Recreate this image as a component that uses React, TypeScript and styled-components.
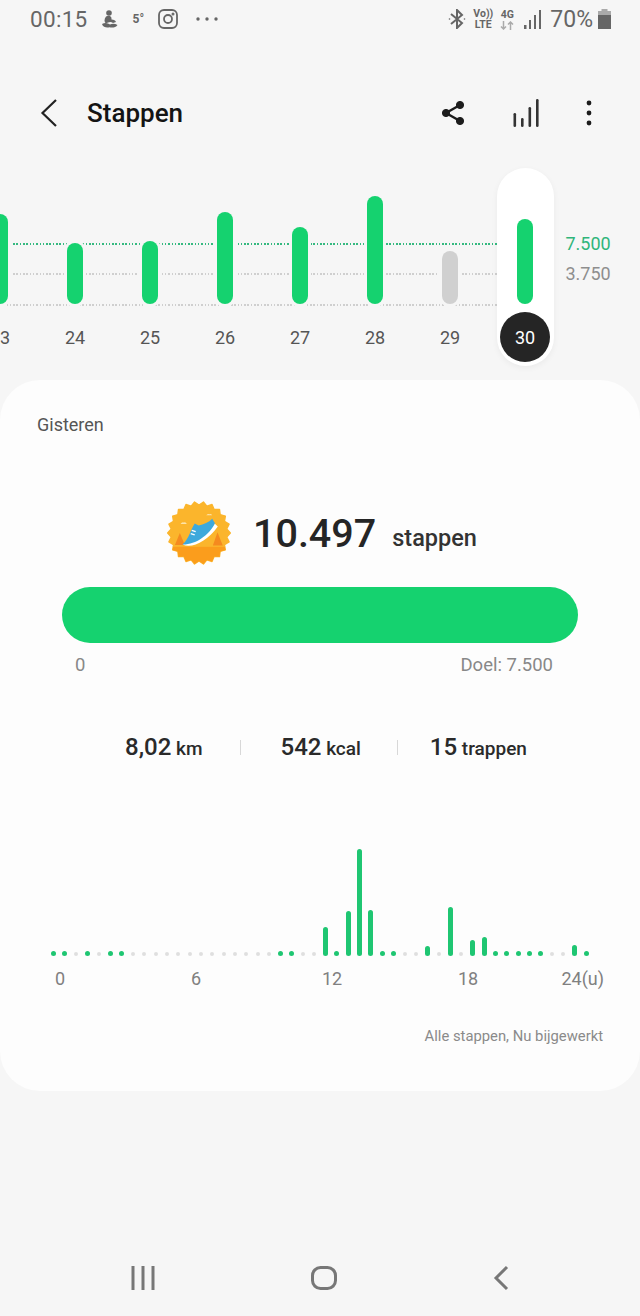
import styled, { createGlobalStyle } from 'styled-components';

const GREEN = '#15d26f';
const CHART_GREEN = '#1fc672';

const days = [
    { label: '23', height: 90 },
    { label: '24', height: 61 },
    { label: '25', height: 63 },
    { label: '26', height: 92 },
    { label: '27', height: 77 },
    { label: '28', height: 108 },
    { label: '29', height: 53, muted: true },
    { label: '30', height: 85, selected: true },
];

// hourly chart: 48 slots, index -> bar height. Anything else is a dot
const hourBars: Record<number, number> = {
    24: 29, 26: 45, 27: 107, 28: 46, 33: 10, 35: 49, 37: 16, 38: 19, 46: 11,
};
const greenDots = [0, 1, 3, 5, 6, 20, 21, 25, 29, 30, 39, 40, 41, 42, 43, 47];
const slots = Array.from({ length: 48 }, (_, i) => i);

const GlobalStyle = createGlobalStyle`
    html, body {
        margin: 0;
        padding: 0;
        background: #f6f6f6;
    }
    body {
        font-family: Roboto, "Liberation Sans", sans-serif;
    }
`;

const Page = styled.div`
    width: 640px;
    height: 1316px;
    overflow: hidden;
    display: flex;
    flex-direction: column;
    background: #f6f6f6;
`;

const StatusBar = styled.div`
    height: 38px;
    padding: 0 29px 0 30px;
    display: flex;
    align-items: center;
    justify-content: space-between;
    color: #666;
`;

const StatusGroup = styled.div`
    display: flex;
    align-items: center;
`;

const Clock = styled.span`
    font-size: 22.5px;
    letter-spacing: 0.3px;
    margin-right: 12px;
`;

const Degrees = styled.span`
    font-size: 12px;
    font-weight: 700;
    margin: 0 14px 0 15px;
`;

const StackedIcon = styled.div<{ $w: number; $gap: number }>`
    width: ${p => p.$w}px;
    margin-right: ${p => p.$gap}px;
    font-size: 10.5px;
    font-weight: 700;
    line-height: 11px;
    text-align: center;
`;

const Percent = styled.span`
    font-size: 23px;
    margin: 0 5px 0 8px;
`;

const Header = styled.header`
    height: 74px;
    margin-top: 38px;
    padding: 0 48px 0 40px;
    display: flex;
    align-items: center;
`;

const Title = styled.h1`
    margin: 0 0 0 29px;
    flex: 1;
    font-size: 26px;
    font-weight: 500;
    color: #141414;
`;

const HeaderActions = styled.div`
    display: flex;
    align-items: center;
    gap: 47px;
`;

const Trend = styled.section`
    position: relative;
    margin-top: 18px;
    height: 198px;
    display: flex;
`;

const GridLine = styled.div<{ $top: number; $green?: boolean }>`
    position: absolute;
    left: 0;
    width: 497px;
    height: 1.5px;
    top: ${p => p.$top}px;
    background: repeating-linear-gradient(
        90deg,
        ${p => (p.$green ? '#35b980' : '#cfcfcf')} 0 1.5px,
        transparent 1.5px 3.3px
    );
`;

const Columns = styled.div`
    position: relative;
    display: flex;
    margin-left: -37.5px;
`;

const Column = styled.div`
    width: 75px;
    display: flex;
    justify-content: center;
`;

const ColumnInner = styled.div<{ $selected?: boolean }>`
    width: 57px;
    height: 198px;
    display: flex;
    flex-direction: column;
    align-items: center;
    border-radius: 29px;
    background: ${p => (p.$selected ? '#fff' : 'transparent')};
    box-shadow: ${p => (p.$selected ? '0 2px 6px rgba(0, 0, 0, 0.05)' : 'none')};
`;

const BarSlot = styled.div`
    height: 136px;
    display: flex;
    align-items: flex-end;
`;

const Bar = styled.div<{ $muted?: boolean; $selected?: boolean }>`
    width: 16px;
    border-radius: 8px;
    background: ${p => (p.$muted ? '#d0d0d0' : GREEN)};
    box-shadow: 0 0 0 3px ${p => (p.$selected ? '#fff' : '#f6f6f6')};
`;

const DayLabel = styled.div<{ $selected?: boolean }>`
    width: 50px;
    height: 50px;
    margin-top: 8px;
    border-radius: 50%;
    display: flex;
    align-items: center;
    justify-content: center;
    font-size: 18px;
    color: ${p => (p.$selected ? '#fff' : '#555')};
    background: ${p => (p.$selected ? '#252525' : 'transparent')};
`;

const Scale = styled.div`
    margin-left: 3px;
    padding-top: 65px;
    display: flex;
    flex-direction: column;
    gap: 8px;
    font-size: 18px;
    line-height: 22px;
`;

const ScaleValue = styled.span<{ $green?: boolean }>`
    color: ${p => (p.$green ? '#2fb57a' : '#8e8e8e')};
`;

const Card = styled.main`
    margin-top: 14px;
    height: 711px;
    box-sizing: border-box;
    padding: 34px 37px 0;
    border-radius: 40px;
    background: #fdfdfd;
    display: flex;
    flex-direction: column;
`;

const CardTitle = styled.div`
    font-size: 18px;
    line-height: 22px;
    color: #555;
`;

const Total = styled.div`
    margin-top: 64px;
    display: flex;
    align-items: center;
    padding-left: 129px;
`;

const TotalValue = styled.span`
    margin-left: 21px;
    font-size: 39.5px;
    font-weight: 500;
    color: #252525;
`;

const TotalUnit = styled.span`
    margin: 9px 0 0 16px;
    font-size: 23.5px;
    font-weight: 500;
    color: #333;
`;

const Progress = styled.div`
    margin: 21px 25px 0;
    height: 56px;
    border-radius: 28px;
    background: ${GREEN};
`;

const GoalRow = styled.div`
    margin: 11px 50px 0 38px;
    display: flex;
    justify-content: space-between;
    font-size: 18.5px;
    line-height: 22px;
    color: #888;
`;

const Stats = styled.div`
    margin-top: 57px;
    height: 27px;
    padding-left: 88px;
    display: flex;
    align-items: baseline;
    color: #2a2a2a;
`;

const Stat = styled.div`
    font-size: 19px;
    font-weight: 500;
    b {
        font-size: 24px;
        font-weight: 500;
    }
`;

const StatDivider = styled.span<{ $before: number; $after: number }>`
    width: 1px;
    height: 15px;
    margin: 0 ${p => p.$after}px 0 ${p => p.$before}px;
    background: #d8d8d8;
`;

const HourChart = styled.div`
    margin: 86px 0 0 11px;
    height: 110px;
    display: flex;
    align-items: flex-end;
`;

const HourSlot = styled.div`
    width: 11.33px;
    display: flex;
    justify-content: center;
`;

const HourBar = styled.div<{ $green: boolean }>`
    width: ${p => (p.$green ? 5 : 4)}px;
    min-height: 4px;
    margin-bottom: ${p => (p.$green ? 0 : 0.5)}px;
    border-radius: 3px;
    background: ${p => (p.$green ? CHART_GREEN : '#dfdfdf')};
`;

const Axis = styled.div`
    margin: 12px 0 0 23px;
    display: grid;
    grid-template-columns: repeat(4, 136px) auto;
    font-size: 18px;
    line-height: 22px;
    color: #808080;
`;

const Tick = styled.span<{ $end?: boolean }>`
    justify-self: start;
    transform: translateX(${p => (p.$end ? '-100%' : '-50%')});
    white-space: nowrap;
`;

const Footnote = styled.div`
    margin-top: 37px;
    text-align: right;
    font-size: 14.8px;
    line-height: 18px;
    color: #8a8a8a;
`;

const NavBar = styled.nav`
    margin-top: 174px;
    padding: 0 131px;
    display: flex;
    align-items: center;
    justify-content: space-between;
`;

// seal outline of the achievement badge, alternating outer and inner radius
const sealPoints = Array.from({ length: 44 }, (_, i) => {
    const a = (i * Math.PI) / 22;
    const r = i % 2 === 0 ? 95 : 85;
    return `${(150 + r * Math.cos(a)).toFixed(1)},${(128 + r * Math.sin(a)).toFixed(1)}`;
}).join(' ');

const Badge = () => (
    <svg width="66" height="66" viewBox="50 28 200 200">
        <defs>
            <clipPath id="badge-seal">
                <polygon points={sealPoints} />
            </clipPath>
        </defs>
        <polygon points={sealPoints} fill="#fbb52c" stroke="#fbb52c" strokeWidth="4" strokeLinejoin="round" />
        <rect x="50" y="170" width="200" height="60" fill="#fb9d1c" clipPath="url(#badge-seal)" />
        <path d="M92 128 L107 164 H77 Z M206 126 L222 166 H192 Z" fill="#f58a1f" />
        <path d="M94 101 q4 -7 10 -5 q6 -3 9 5 Z M172 74 q5 -5 10 -3 q5 -1 8 3 Z" fill="#fde3a8" />
        <path d="M100 163 C122 142 124 118 137 99 L149 105 C164 102 180 96 190 85 L198 98 C196 118 180 134 160 147 C140 160 118 168 100 163 Z" fill="#3ea9dc" />
        <path d="M100 163 C130 176 176 152 207 108 L198 100 C180 134 140 164 100 163 Z" fill="#fff" />
        <path d="M128 120 l12 4 M125 130 l12 4" stroke="#fff" strokeWidth="4" />
    </svg>
);

const App = () => {
    return (
        <Page>
            <GlobalStyle />
            <StatusBar>
                <StatusGroup>
                    <Clock>00:15</Clock>
                    <svg width="18" height="18" viewBox="0 0 18 18" fill="#666">
                        <circle cx="9" cy="3" r="2.8" />
                        <path d="M6 6.5 C9 5 12 6 11.5 9.5 C14 9.5 15.5 10.5 16 12 L13 13 C11 11 8 12 6 13.5 C4 12 4 9 6 6.5 Z" />
                        <path d="M2 14 C5 12 8 13 10 14.5 C12 13.5 15 13.5 17.5 15 C16 17.5 12 18 9.5 17.2 C7 18 3 17.5 2 14 Z" />
                    </svg>
                    <Degrees>5°</Degrees>
                    <svg width="20" height="20" viewBox="0 0 20 20" fill="none" stroke="#666" strokeWidth="1.8">
                        <rect x="1" y="1" width="18" height="18" rx="5" />
                        <circle cx="10" cy="10" r="4" />
                        <circle cx="15" cy="5" r="0.6" fill="#666" />
                    </svg>
                    <svg width="22" height="4" viewBox="0 0 22 4" fill="#666" style={{ marginLeft: 18 }}>
                        <circle cx="2" cy="2" r="1.7" />
                        <circle cx="11" cy="2" r="1.7" />
                        <circle cx="20" cy="2" r="1.7" />
                    </svg>
                </StatusGroup>
                <StatusGroup>
                    <svg width="18" height="20" viewBox="0 0 18 20" fill="none" stroke="#666" strokeWidth="2" style={{ marginRight: 7 }}>
                        <path d="M3 5 L14 14 L9 19 V1 L14 6 L3 15" />
                        <circle cx="1.5" cy="10" r="0.8" fill="#666" stroke="none" />
                        <circle cx="16.5" cy="10" r="0.8" fill="#666" stroke="none" />
                    </svg>
                    <StackedIcon $w={20} $gap={6}>Vo))<br />LTE</StackedIcon>
                    <StackedIcon $w={16} $gap={9}>
                        4G
                        <svg width="14" height="9" viewBox="0 0 14 9" fill="none" strokeWidth="1.5" style={{ display: 'block', margin: '1px auto 0' }}>
                            <path d="M3.5 0 V8 M1 5.5 L3.5 8 L6 5.5" stroke="#aaa" />
                            <path d="M10.5 9 V1 M8 3.5 L10.5 1 L13 3.5" stroke="#aaa" />
                        </svg>
                    </StackedIcon>
                    <svg width="18" height="19" viewBox="0 0 18 19" fill="#666">
                        <rect x="0" y="15" width="2.5" height="4" />
                        <rect x="5" y="10" width="2" height="9" />
                        <rect x="10" y="5" width="2" height="14" />
                        <rect x="15" y="0" width="2" height="19" />
                    </svg>
                    <Percent>70%</Percent>
                    <svg width="13" height="20" viewBox="0 0 13 20">
                        <rect x="3.5" y="0" width="6" height="3" fill="#aaa" />
                        <rect x="0" y="2" width="13" height="4" fill="#aaa" />
                        <rect x="0" y="6" width="13" height="14" fill="#666" />
                    </svg>
                </StatusGroup>
            </StatusBar>

            <Header>
                <svg width="18" height="30" viewBox="0 0 18 30" fill="none" stroke="#222" strokeWidth="2.2">
                    <path d="M16 2 L2.5 15 L16 28" />
                </svg>
                <Title>Stappen</Title>
                <HeaderActions>
                    <svg width="26" height="26" viewBox="0 0 26 26" fill="#1c1c1c" stroke="#1c1c1c">
                        <path d="M20 5 L6 13 L20 21" fill="none" strokeWidth="2.4" />
                        <circle cx="20" cy="5" r="3.6" />
                        <circle cx="6" cy="13" r="3.6" />
                        <circle cx="20" cy="21" r="3.6" />
                    </svg>
                    <svg width="26" height="28" viewBox="0 0 26 28" fill="#333">
                        <rect x="0.5" y="14" width="2.6" height="14" rx="1.3" />
                        <rect x="8" y="19" width="2.6" height="9" rx="1.3" />
                        <rect x="15.5" y="8" width="2.6" height="20" rx="1.3" />
                        <rect x="23" y="0" width="2.6" height="28" rx="1.3" />
                    </svg>
                    <svg width="6" height="26" viewBox="0 0 6 26" fill="#1c1c1c">
                        <circle cx="3" cy="3" r="2.4" />
                        <circle cx="3" cy="13" r="2.4" />
                        <circle cx="3" cy="23" r="2.4" />
                    </svg>
                </HeaderActions>
            </Header>

            <Trend>
                <GridLine $top={75} $green />
                <GridLine $top={105} />
                <GridLine $top={136} />
                <Columns>
                    {days.map(day => (
                        <Column key={day.label}>
                            <ColumnInner $selected={day.selected}>
                                <BarSlot>
                                    <Bar $muted={day.muted} $selected={day.selected} style={{ height: day.height }} />
                                </BarSlot>
                                <DayLabel $selected={day.selected}>{day.label}</DayLabel>
                            </ColumnInner>
                        </Column>
                    ))}
                </Columns>
                <Scale>
                    <ScaleValue $green>7.500</ScaleValue>
                    <ScaleValue>3.750</ScaleValue>
                </Scale>
            </Trend>

            <Card>
                <CardTitle>Gisteren</CardTitle>
                <Total>
                    <Badge />
                    <TotalValue>10.497</TotalValue>
                    <TotalUnit>stappen</TotalUnit>
                </Total>
                <Progress />
                <GoalRow>
                    <span>0</span>
                    <span>Doel: 7.500</span>
                </GoalRow>
                <Stats>
                    <Stat><b>8,02</b> km</Stat>
                    <StatDivider $before={38} $after={39} />
                    <Stat><b>542</b> kcal</Stat>
                    <StatDivider $before={36} $after={32} />
                    <Stat><b>15</b> trappen</Stat>
                </Stats>
                <HourChart>
                    {slots.map(i => (
                        <HourSlot key={i}>
                            <HourBar
                                $green={i in hourBars || greenDots.includes(i)}
                                style={{ height: hourBars[i] ?? (greenDots.includes(i) ? 5 : 4) }}
                            />
                        </HourSlot>
                    ))}
                </HourChart>
                <Axis>
                    <Tick>0</Tick>
                    <Tick>6</Tick>
                    <Tick>12</Tick>
                    <Tick>18</Tick>
                    <Tick $end>24(u)</Tick>
                </Axis>
                <Footnote>Alle stappen, Nu bijgewerkt</Footnote>
            </Card>

            <NavBar>
                <svg width="24" height="24" viewBox="0 0 24 24" fill="#777">
                    <rect x="0.5" y="0" width="3" height="24" />
                    <rect x="10.5" y="0" width="3" height="24" />
                    <rect x="20.5" y="0" width="3" height="24" />
                </svg>
                <svg width="26" height="24" viewBox="0 0 26 24" fill="none" stroke="#777" strokeWidth="3">
                    <rect x="1.5" y="1.5" width="23" height="21" rx="8" />
                </svg>
                <svg width="16" height="26" viewBox="0 0 16 26" fill="none" stroke="#777" strokeWidth="3">
                    <path d="M14 2 L3 13 L14 24" />
                </svg>
            </NavBar>
        </Page>
    );
};

export default App;
